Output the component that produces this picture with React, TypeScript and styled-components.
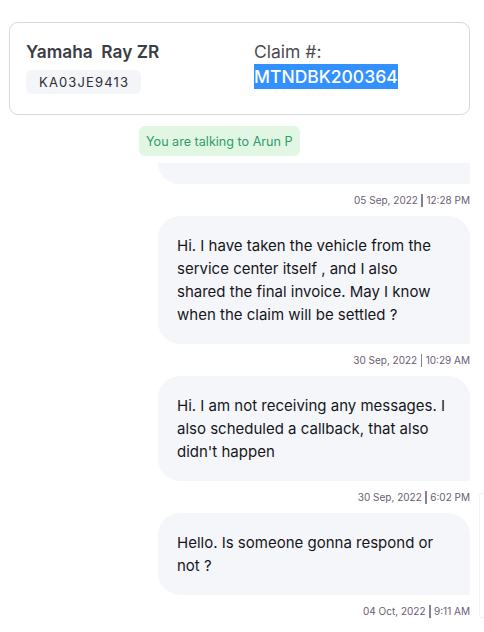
import styled, { createGlobalStyle } from 'styled-components';

interface ChatMessage {
  id: number;
  text: string;
  time: string;
  date: string;
}

const messages: ChatMessage[] = [
  {
    id: 1,
    text: 'Hi. I have taken the vehicle from the service center itself , and I also shared the final invoice. May I know when the claim will be settled ?',
    date: '30 Sep, 2022',
    time: '10:29 AM',
  },
  {
    id: 2,
    text: "Hi. I am not receiving any messages. I also scheduled a callback, that also didn't happen",
    date: '30 Sep, 2022',
    time: '6:02 PM',
  },
  {
    id: 3,
    text: 'Hello. Is someone gonna respond or not ?',
    date: '04 Oct, 2022',
    time: '9:11 AM',
  },
];

const GlobalStyle = createGlobalStyle`
  body {
    margin: 0;
    background: #ffffff;
    font-family: Inter, "Noto Sans", sans-serif;
  }
`;

const Stamp = ({ date, time }: { date: string; time: string }) => (
  <TimeRow>
    {date}
    <Divider />
    {time}
  </TimeRow>
);

export default function App() {
  return (
    <>
      <GlobalStyle />
      <Page>
        <ClaimCard>
          <div>
            <Model>Yamaha  Ray ZR</Model>
            <Plate>KA03JE9413</Plate>
          </div>
          <ClaimInfo>
            <ClaimLabel>Claim #:</ClaimLabel>
            <ClaimNumber>MTNDBK200364</ClaimNumber>
          </ClaimInfo>
        </ClaimCard>

        <AgentChip>You are talking to Arun P</AgentChip>

        <ChatList>
          <Bubble $clipped />
          <Stamp date="05 Sep, 2022" time="12:28 PM" />
          {messages.map((m) => (
            <MessageGroup key={m.id}>
              <Bubble>{m.text}</Bubble>
              <Stamp date={m.date} time={m.time} />
            </MessageGroup>
          ))}
        </ChatList>

        <ScrollThumb />
      </Page>
    </>
  );
}

const Page = styled.div`
  position: relative;
  width: 484px;
  height: 632px;
  box-sizing: border-box;
  padding: 22px 14px 0 9px;
  overflow: hidden;
`;

const ClaimCard = styled.div`
  display: grid;
  grid-template-columns: 228px 1fr;
  padding: 16px 16px 20px;
  border: 1px solid #d8d8d8;
  border-radius: 9px;
`;

const Model = styled.div`
  font-size: 17.3px;
  font-weight: 600;
  line-height: 25px;
  color: #3a3d44;
  white-space: pre;
`;

const Plate = styled.span`
  display: inline-flex;
  align-items: center;
  height: 24px;
  margin-top: 6px;
  padding: 0 12px 0 13px;
  border-radius: 6px;
  background: #f4f5f9;
  font-size: 13px;
  letter-spacing: 1.15px;
  color: #2e2e33;
`;

const ClaimInfo = styled.div`
  display: flex;
  flex-direction: column;
  align-items: flex-start;
  font-size: 17.5px;
  line-height: 25px;
`;

const ClaimLabel = styled.span`
  color: #4b4b4f;
`;

const ClaimNumber = styled.span`
  font-weight: 500;
  color: #ffffff;
  background: #3390ff;
`;

const AgentChip = styled.div`
  display: inline-flex;
  align-items: center;
  height: 30px;
  margin: 11px 0 0 130px;
  padding: 0 7px;
  border-radius: 6px;
  background: #e2f7e3;
  color: #2e9c6c;
  font-size: 12.6px;
`;

const ChatList = styled.div`
  display: flex;
  flex-direction: column;
  align-items: flex-end;
  margin-top: 7px;
`;

const MessageGroup = styled.div`
  display: flex;
  flex-direction: column;
  align-items: flex-end;
`;

const Bubble = styled.div<{ $clipped?: boolean }>`
  box-sizing: border-box;
  width: 312px;
  height: ${(p) => (p.$clipped ? '21px' : 'auto')};
  padding: ${(p) => (p.$clipped ? '0' : '18px 22px 18px 19px')};
  border-radius: ${(p) => (p.$clipped ? '0 0 0 22px' : '22px 22px 0 22px')};
  background: #f5f6fa;
  color: #16161a;
  font-size: 15px;
  line-height: 23px;
`;

const TimeRow = styled.div`
  display: flex;
  align-items: center;
  height: 16px;
  margin: 8px 0;
  font-size: 10px;
  color: #6a5e74;
`;

const Divider = styled.span`
  width: 1.5px;
  height: 13px;
  margin: 0 3.5px;
  background: #8a8094;
`;

const ScrollThumb = styled.div`
  position: absolute;
  right: 0;
  top: 493px;
  width: 4px;
  height: 123px;
  border: 1px solid #f3f3f5;
  border-right: none;
  border-radius: 3px 0 0 3px;
`;
